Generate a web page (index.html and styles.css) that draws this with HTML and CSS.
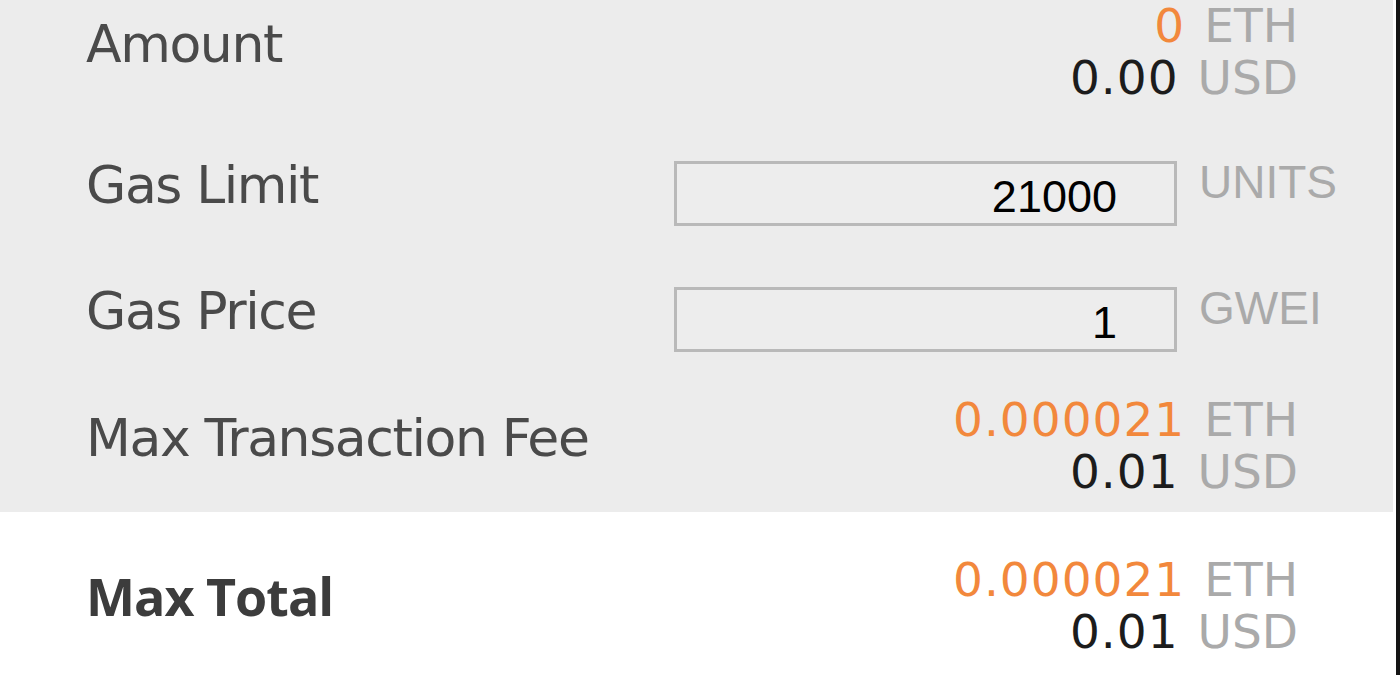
FILE: index.html
```html
<!DOCTYPE html>
<html lang="en">
<head>
<meta charset="utf-8">
<title>Transaction fees</title>
<link rel="stylesheet" href="styles.css">
</head>
<body>
<div class="page">
  <main class="panel">
    <section class="fees">
      <div class="row row-amount">
        <div class="label">Amount</div>
        <div class="value">
          <div class="line"><span class="num orange">0</span><span class="cur">ETH</span></div>
          <div class="line"><span class="num">0.00</span><span class="cur">USD</span></div>
        </div>
      </div>
      <div class="row row-input row-limit">
        <div class="label">Gas Limit</div>
        <input class="field" type="text" value="21000">
        <div class="unit">UNITS</div>
      </div>
      <div class="row row-input row-price">
        <div class="label">Gas Price</div>
        <input class="field" type="text" value="1">
        <div class="unit">GWEI</div>
      </div>
      <div class="row row-fee">
        <div class="label">Max Transaction Fee</div>
        <div class="value">
          <div class="line"><span class="num orange">0.000021</span><span class="cur">ETH</span></div>
          <div class="line"><span class="num">0.01</span><span class="cur">USD</span></div>
        </div>
      </div>
    </section>
    <section class="total">
      <div class="row row-total">
        <div class="label label-bold">Max Total</div>
        <div class="value">
          <div class="line"><span class="num orange">0.000021</span><span class="cur">ETH</span></div>
          <div class="line"><span class="num">0.01</span><span class="cur">USD</span></div>
        </div>
      </div>
    </section>
  </main>
  <div class="gutter"></div>
  <div class="edge"></div>
</div>
</body>
</html>
```

FILE: styles.css
```css
html, body {
  margin: 0;
  padding: 0;
  background: #ffffff;
}

body {
  font-family: "DejaVu Sans", sans-serif;
  height: 675px;
  overflow: hidden;
}

.page {
  display: flex;
  height: 675px;
}

.panel {
  flex: 1;
  display: flex;
  flex-direction: column;
}

.gutter {
  width: 3px;
  background: #ffffff;
}

.edge {
  width: 4px;
  background: #151515;
}

.fees {
  background: #ececec;
  padding-bottom: 14px;
  display: flex;
  flex-direction: column;
}

.total {
  background: #ffffff;
  padding-top: 42px;
}

.row {
  display: grid;
  grid-template-columns: 1fr 505px 194px;
  column-gap: 20px;
  padding-left: 86px;
  align-items: center;
}

.row-amount { margin-bottom: 57px; }
.row-limit { margin-bottom: 61px; }
.row-price { margin-bottom: 42px; }

.label {
  font-size: 52px;
  line-height: 52px;
  letter-spacing: -1.4px;
  color: #4a4a4a;
  margin-bottom: 16px;
  white-space: nowrap;
}

.row-input .label {
  align-self: start;
  margin: -2px 0 0;
}

.label-bold {
  font-family: "Open Sans", sans-serif;
  font-weight: 700;
  letter-spacing: -1px;
  color: #3c3c3c;
  margin-bottom: 20px;
}

.value {
  grid-column: 2 / 4;
  padding-right: 95px;
  text-align: right;
}

.line {
  font-size: 47px;
  line-height: 52px;
  white-space: nowrap;
}

.num {
  color: #1c1c1c;
  letter-spacing: 1px;
}

.num.orange {
  color: #f2883c;
}

.cur {
  color: #aaaaaa;
  margin-left: 19px;
}

.field {
  box-sizing: border-box;
  width: 503px;
  height: 65px;
  margin: 0;
  border: 3px solid #b9b9b9;
  background: #ededed;
  font-family: "Liberation Sans", Arial, sans-serif;
  font-size: 45px;
  color: #000000;
  text-align: right;
  padding: 6px 57px 0 10px;
  outline: none;
}

.unit {
  align-self: start;
  margin-top: -5px;
  font-family: "Liberation Sans", Arial, sans-serif;
  font-size: 46px;
  line-height: 52px;
  color: #aaaaaa;
}
```
